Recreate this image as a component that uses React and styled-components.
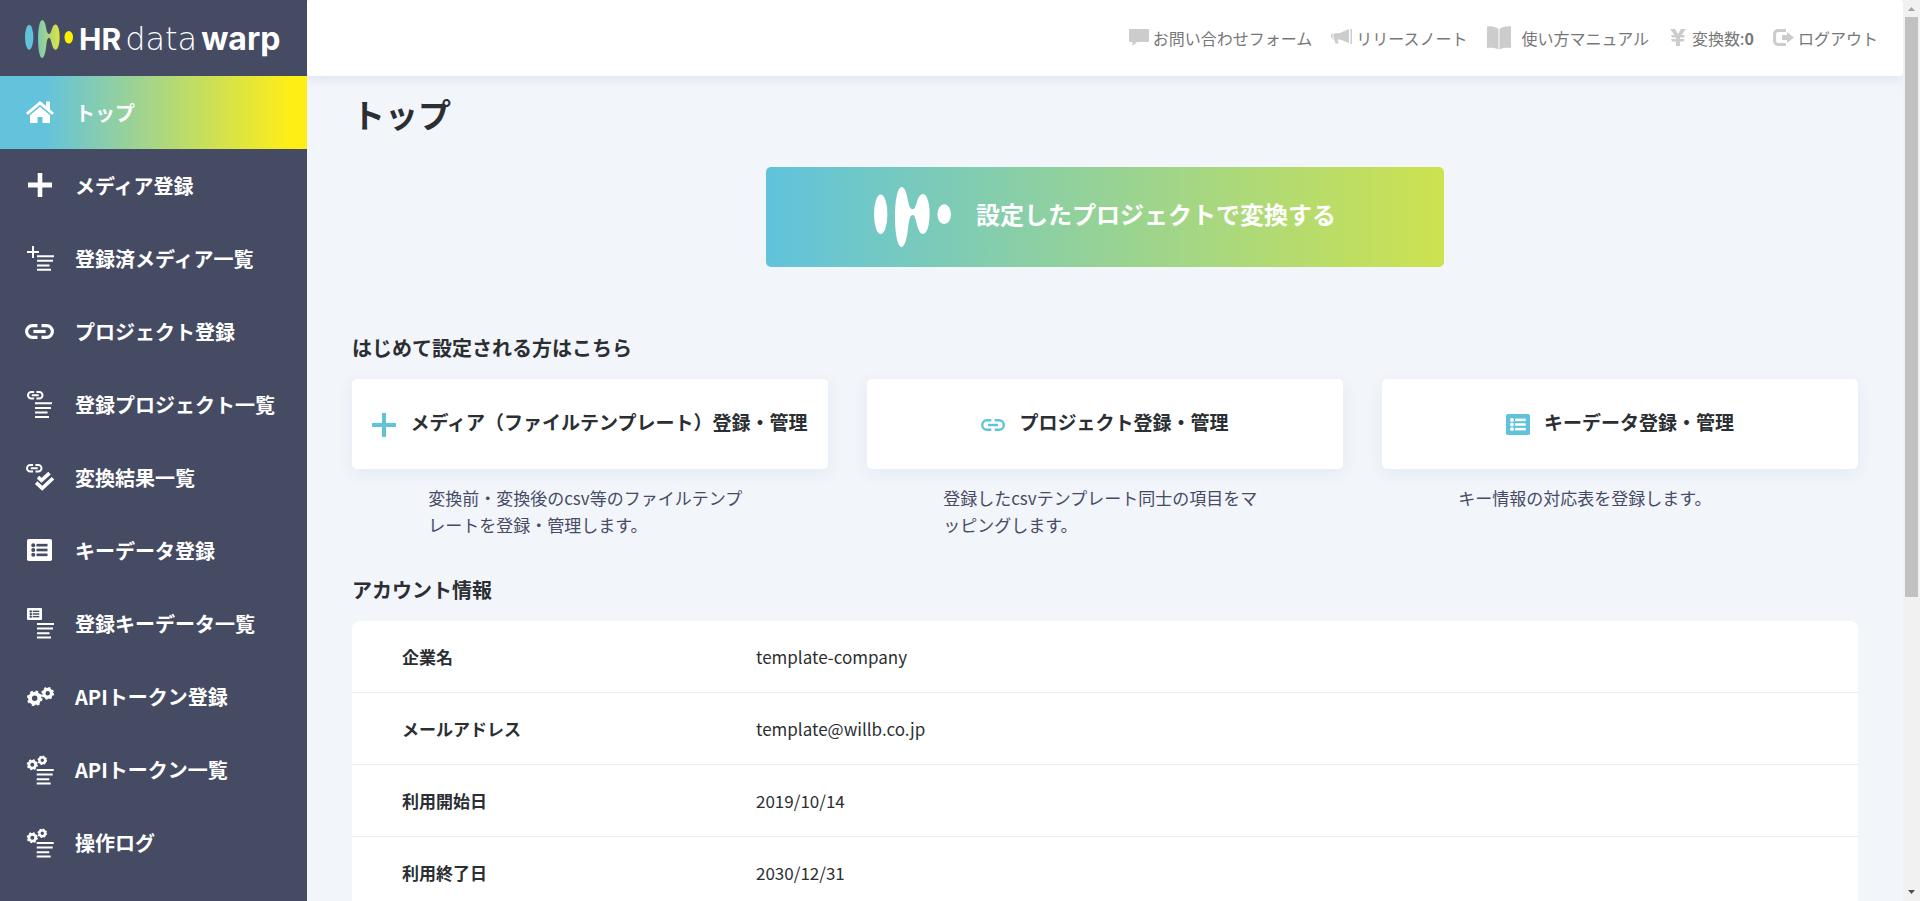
import React from 'react';
import styled, { createGlobalStyle } from 'styled-components';

const GlobalStyle = createGlobalStyle`
  *, *::before, *::after {
    box-sizing: border-box;
  }
  body {
    margin: 0;
    background: #f2f5fa;
    color: #2b2f33;
    font-family: 'Noto Sans CJK JP', 'Noto Sans', sans-serif;
    font-size: 17px;
  }
  a {
    color: inherit;
    text-decoration: none;
  }
  svg {
    display: block;
    flex: none;
    overflow: visible;
  }
`;

const Layout = styled.div`
  display: flex;
  height: 100vh;
  overflow: hidden;
`;

const Sidebar = styled.aside`
  flex: none;
  width: 307px;
  background: #464b64;
  color: #fff;
`;

const Logo = styled.a`
  display: flex;
  align-items: center;
  height: 76px;
  padding: 2px 0 0 25px;
`;

const LogoText = styled.span`
  display: flex;
  align-items: baseline;
  gap: 4px;
  margin-left: 6px;
  font-family: Inter, sans-serif;
  font-size: 32px;
  line-height: 40px;
`;

const LogoBold = styled.span`
  font-weight: 700;
`;

const LogoShort = styled(LogoBold)`
  font-size: 30px;
`;

const LogoThin = styled.span`
  font-family: 'DejaVu Sans Light', 'DejaVu Sans', sans-serif;
  font-weight: 200;
`;

const NavLink = styled.a`
  display: flex;
  align-items: center;
  gap: 20px;
  height: 73px;
  padding-left: 25px;
  font-size: 20px;
  font-weight: 700;
  line-height: 30px;
  white-space: nowrap;
  background: ${({ $active }) =>
    $active ? 'linear-gradient(90deg, #64c3dc 15%, #ffee14 95%)' : 'none'};
`;

const Page = styled.div`
  flex: 1;
  min-width: 0;
  overflow: hidden;
`;

const Header = styled.header`
  display: flex;
  align-items: center;
  justify-content: flex-end;
  gap: 19px;
  height: 76px;
  padding-right: 25px;
  border-radius: 4px;
  background: #fff;
  box-shadow: 0 3px 12px rgba(70, 100, 150, 0.12);
  color: #777;
  font-size: 16px;
  line-height: 24px;
  white-space: nowrap;
`;

const HeaderLink = styled.a`
  display: flex;
  align-items: center;
  gap: ${({ $wide }) => ($wide ? '11px' : '4px')};

  svg {
    color: #ccc;
  }
`;

const Main = styled.main`
  padding: 14px 45px 45px;
`;

const Title = styled.h1`
  margin: 0 0 29px;
  font-size: 33px;
  font-weight: 700;
  line-height: 48px;
`;

const ConvertButton = styled.button`
  display: flex;
  align-items: center;
  justify-content: center;
  gap: 25px;
  width: 45%;
  height: 100px;
  margin: 0 auto 66px;
  padding: 0;
  border: 0;
  border-radius: 5px;
  background: linear-gradient(90deg, #60c3dc, #cde24f);
  color: #fff;
  font-family: inherit;
  font-size: 24px;
  font-weight: 700;
  line-height: 36px;
  cursor: pointer;
`;

const ConvertLabel = styled.span`
  padding-bottom: 6px;
`;

const SectionTitle = styled.h2`
  margin: 0 0 16px;
  font-size: 20px;
  font-weight: 700;
  line-height: 30px;
`;

const Cards = styled.div`
  display: grid;
  grid-template-columns: repeat(3, 1fr);
  gap: 39px;
  margin-bottom: 37px;
`;

const CardLink = styled.a`
  display: flex;
  align-items: center;
  justify-content: center;
  gap: 14px;
  height: 90px;
  border-radius: 5px;
  background: #fff;
  box-shadow: 0 4px 16px rgba(70, 90, 150, 0.08);
  font-size: 19px;
  font-weight: 700;
  line-height: 30px;
  white-space: nowrap;

  svg {
    color: #61c3db;
  }
`;

const CardLabel = styled.span`
  padding-bottom: 4px;
`;

const CardText = styled.p`
  margin: 15px 16% 0;
  color: #464b64;
  font-weight: 400;
  line-height: 27px;
  word-break: break-all;
`;

const InfoTable = styled.table`
  width: 100%;
  border-collapse: separate;
  border-spacing: 0;
  border-radius: 8px;
  background: #fff;
  line-height: 26px;

  th,
  td {
    height: 72px;
    padding: 0;
    border-bottom: 1px solid #e9ebee;
    text-align: left;
  }
  th {
    width: 404px;
    padding-left: 50px;
    font-weight: 700;
  }
  td {
    font-weight: 400;
  }
`;

const ScrollRail = styled.div`
  display: flex;
  flex-direction: column;
  align-items: center;
  justify-content: space-between;
  flex: none;
  width: 17px;
  padding: 7px 0;
  background: #f1f1f1;
`;

const ScrollThumb = styled.div`
  width: 13px;
  height: calc(66% - 5px);
  margin: 6px 0 auto;
  background: #c1c1c1;
`;

const Mark = ({ width, height, colored }) => (
  <svg width={width} height={height} viewBox="0 0 77 60" preserveAspectRatio="none" aria-hidden="true">
    <defs>
      <linearGradient id="markFill" x1="0" x2="1" y1="0" y2="0">
        <stop offset="0" stopColor="#7bcab8" />
        <stop offset="1" stopColor="#dfe43c" />
      </linearGradient>
    </defs>
    <ellipse cx="6.7" cy="27.3" rx="6.7" ry="19.7" fill={colored ? '#61c3db' : '#fff'} />
    <path
      d="M27.5 0C31 0 33 7 34 14C35 20 37 22.3 38.7 22.3C41 22.3 42 18 43.4 13.500C44.500 10 46.500 7 49 7C53 7 55.600 16 55.600 27S53 47 49 47C46 47 44 42 42.500 36C41.500 31.500 40.500 28 38.700 28C36 28 35 33 34.200 40C33.200 50 31 60 27.500 60C23.500 60 21 46 21 30S23.500 0 27.500 0Z"
      fill={colored ? 'url(#markFill)' : '#fff'}
    />
    <ellipse cx="70.2" cy="27.2" rx="6.8" ry="10" fill={colored ? '#fff000' : '#fff'} />
  </svg>
);

const NavSvg = ({ children }) => (
  <svg width="30" height="29" viewBox="0 0 30 29" fill="currentColor" aria-hidden="true">
    {children}
  </svg>
);

const Lines = ({ x, y }) => (
  <path d={`M${x} ${y}h17v2h-17zM${x} ${y + 4.6}h16v2h-16zM${x} ${y + 9.2}h12.500v2h-12.500zM${x} ${y + 13.6}h14v2h-14z`} />
);

const Chain = ({ x = 0, y = 0, w, h, stroke }) => {
  const s = stroke / 2;
  const r = h / 2 - s;
  const mid = x + w / 2;
  return (
    <g fill="none" stroke="currentColor" strokeWidth={stroke}>
      <path d={`M${mid - w * 0.07} ${y + s}H${x + r + s}a${r} ${r} 0 0 0 0 ${2 * r}H${mid - w * 0.07}`} />
      <path d={`M${mid + w * 0.07} ${y + s}H${x + w - r - s}a${r} ${r} 0 0 1 0 ${2 * r}H${mid + w * 0.07}`} />
      <path d={`M${x + w * 0.29} ${y + h / 2}H${x + w * 0.71}`} />
    </g>
  );
};

const Gear = ({ x, y, r }) => {
  const teeth = r * 0.84;
  return (
    <g fill="none" stroke="currentColor">
      <circle cx={x} cy={y} r={r * 0.6} strokeWidth={r * 0.5} />
      <circle
        cx={x}
        cy={y}
        r={teeth}
        strokeWidth={r * 0.32}
        strokeDasharray={`${(Math.PI * teeth) / 8} ${(Math.PI * teeth) / 8}`}
      />
    </g>
  );
};

const ListBox = ({ x, y, w, h, hole }) => (
  <g>
    <rect x={x} y={y} width={w} height={h} rx={w * 0.07} />
    <g fill={hole}>
      {[0.28, 0.5, 0.72].map((p) => (
        <g key={p}>
          <circle cx={x + w * 0.25} cy={y + h * p} r={w * 0.08} />
          <rect x={x + w * 0.38} y={y + h * p - h * 0.06} width={w * 0.44} height={h * 0.12} />
        </g>
      ))}
    </g>
  </g>
);

const GearsList = () => (
  <NavSvg>
    <Gear x={7.3} y={9.7} r={5.6} />
    <Gear x={17.3} y={5.3} r={4.8} />
    <Lines x={11.7} y={14} />
  </NavSvg>
);

const NAV = [
  {
    label: 'トップ',
    active: true,
    icon: (
      <NavSvg>
        <path d="M15 3L1 14.800l1.800 2.200L15 6.800L27.200 17l1.800-2.200l-4-3.400V3.500h-4v4.500z" />
        <path d="M15 8.800L5 17.200V25h7.500v-6h5v6H25v-7.800z" />
      </NavSvg>
    ),
  },
  {
    label: 'メディア登録',
    icon: (
      <NavSvg>
        <path d="M12.700 2h4.600v9.500H27v5h-9.700V26h-4.600v-9.500H3v-5h9.700z" />
      </NavSvg>
    ),
  },
  {
    label: '登録済メディア一覧',
    icon: (
      <NavSvg>
        <path d="M7 2h2v5h5v2H9v5H7V9H2V7h5z" />
        <Lines x={12} y={11.2} />
      </NavSvg>
    ),
  },
  {
    label: 'プロジェクト登録',
    icon: (
      <NavSvg>
        <Chain y={7} w={29} h={15} stroke={3.2} />
      </NavSvg>
    ),
  },
  {
    label: '登録プロジェクト一覧',
    icon: (
      <NavSvg>
        <Chain x={2} y={1} w={16.5} h={8.5} stroke={2} />
        <Lines x={10} y={12.3} />
      </NavSvg>
    ),
  },
  {
    label: '変換結果一覧',
    icon: (
      <NavSvg>
        <Chain x={1} y={1} w={16.5} h={8.5} stroke={2} />
        <g fill="none" stroke="currentColor" strokeWidth="3.6">
          <path d="M13 14.200L16.500 17.400L24.500 10.200" />
          <path d="M11.200 19.600L17.200 25.300L28 15.200" />
        </g>
      </NavSvg>
    ),
  },
  {
    label: 'キーデータ登録',
    icon: (
      <NavSvg>
        <ListBox x={2} y={3} w={25} h={22} hole="#464b64" />
      </NavSvg>
    ),
  },
  {
    label: '登録キーデータ一覧',
    icon: (
      <NavSvg>
        <ListBox x={2} y={-1} w={15} h={12} hole="#464b64" />
        <Lines x={12} y={14} />
      </NavSvg>
    ),
  },
  {
    label: 'APIトークン登録',
    icon: (
      <NavSvg>
        <Gear x={9.7} y={16.3} r={7.8} />
        <Gear x={22.7} y={11.3} r={6.4} />
      </NavSvg>
    ),
  },
  { label: 'APIトークン一覧', icon: <GearsList /> },
  { label: '操作ログ', icon: <GearsList /> },
];

const CARDS = [
  {
    title: 'メディア（ファイルテンプレート）登録・管理',
    text: '変換前・変換後のcsv等のファイルテンプレートを登録・管理します。',
    icon: <path d="M10 1h4v10h10v4H14v10h-4V15H0v-4h10z" />,
  },
  {
    title: 'プロジェクト登録・管理',
    text: '登録したcsvテンプレート同士の項目をマッピングします。',
    icon: <Chain y={7} w={24} h={12} stroke={2.4} />,
  },
  {
    title: 'キーデータ登録・管理',
    text: 'キー情報の対応表を登録します。',
    icon: <ListBox x={0} y={2} w={24} h={21} hole="#fff" />,
  },
];

const ACCOUNT = [
  ['企業名', 'template-company'],
  ['メールアドレス', 'template@willb.co.jp'],
  ['利用開始日', '2019/10/14'],
  ['利用終了日', '2030/12/31'],
];

const App = () => (
  <>
    <GlobalStyle />
    <Layout>
      <Sidebar>
        <Logo href="#">
          <Mark width={48} height={38} colored />
          <LogoText>
            <LogoShort>HR</LogoShort>
            <LogoThin>data</LogoThin>
            <LogoBold>warp</LogoBold>
          </LogoText>
        </Logo>
        <nav>
          {NAV.map((item) => (
            <NavLink key={item.label} href="#" $active={item.active}>
              {item.icon}
              {item.label}
            </NavLink>
          ))}
        </nav>
      </Sidebar>

      <Page>
        <Header>
          <HeaderLink href="#">
            <svg width="20" height="18" viewBox="0 0 20 18" fill="currentColor" aria-hidden="true">
              <path d="M1 0h18a1 1 0 0 1 1 1v11a1 1 0 0 1-1 1H8l-4.500 4V13H1a1 1 0 0 1-1-1V1a1 1 0 0 1 1-1z" />
            </svg>
            お問い合わせフォーム
          </HeaderLink>
          <HeaderLink href="#">
            <svg width="21" height="18" viewBox="0 0 21 18" fill="currentColor" aria-hidden="true">
              <path d="M0 5.500l1.500-1v5L0 8.500zM2.500 4.500L9 4l9-4v14l-9-3.500H6.500l1 4H4.500l-1.200-4h-.8zM19.500 0H21v15h-1.500z" />
            </svg>
            リリースノート
          </HeaderLink>
          <HeaderLink href="#" $wide>
            <svg width="24" height="24" viewBox="0 0 24 24" fill="currentColor" aria-hidden="true">
              <path d="M0 0.500C5 0 9 1 11.500 3v20.500C9 22 5 21.500 0 22zM24 0.500C19 0 15 1 12.500 3v20.500C15 22 19 21.500 24 22z" />
            </svg>
            使い方マニュアル
          </HeaderLink>
          <HeaderLink href="#">
            <svg width="20" height="18" viewBox="0 0 20 18" fill="currentColor" aria-hidden="true">
              <path d="M2 0h5l3 5l3-5h5l-4.500 6H17l-1 2.500h-4v1.500h4.500l-1 2.500H12v4.500H8v-4.500H4L3 10h5V8.500H4L3 6h3.500z" />
            </svg>
            <span>
              変換数:<b>0</b>
            </span>
          </HeaderLink>
          <HeaderLink href="#">
            <svg width="21" height="18" viewBox="0 0 21 18" aria-hidden="true">
              <path d="M13 1.600H5A3.400 3.400 0 0 0 1.600 5v7A3.400 3.400 0 0 0 5 15.400h8" fill="none" stroke="currentColor" strokeWidth="3" />
              <path d="M9 6h5V3l7 5.500l-7 5.500v-3H9z" fill="currentColor" />
            </svg>
            ログアウト
          </HeaderLink>
        </Header>

        <Main>
          <Title>トップ</Title>
          <ConvertButton type="button">
            <Mark width={77} height={60} />
            <ConvertLabel>設定したプロジェクトで変換する</ConvertLabel>
          </ConvertButton>

          <SectionTitle>はじめて設定される方はこちら</SectionTitle>
          <Cards>
            {CARDS.map((card) => (
              <div key={card.title}>
                <CardLink href="#">
                  <svg width="24" height="24" viewBox="0 0 24 24" fill="currentColor" aria-hidden="true">
                    {card.icon}
                  </svg>
                  <CardLabel>{card.title}</CardLabel>
                </CardLink>
                <CardText>{card.text}</CardText>
              </div>
            ))}
          </Cards>

          <SectionTitle>アカウント情報</SectionTitle>
          <InfoTable>
            <tbody>
              {ACCOUNT.map(([label, value]) => (
                <tr key={label}>
                  <th scope="row">{label}</th>
                  <td>{value}</td>
                </tr>
              ))}
            </tbody>
          </InfoTable>
        </Main>
      </Page>

      <ScrollRail aria-hidden="true">
        <svg width="7" height="4" viewBox="0 0 7 4" fill="#a3a3a3">
          <path d="M0 4L3.500 0L7 4z" />
        </svg>
        <ScrollThumb />
        <svg width="7" height="4" viewBox="0 0 7 4" fill="#505050">
          <path d="M0 0L3.500 4L7 0z" />
        </svg>
      </ScrollRail>
    </Layout>
  </>
);

export default App;
